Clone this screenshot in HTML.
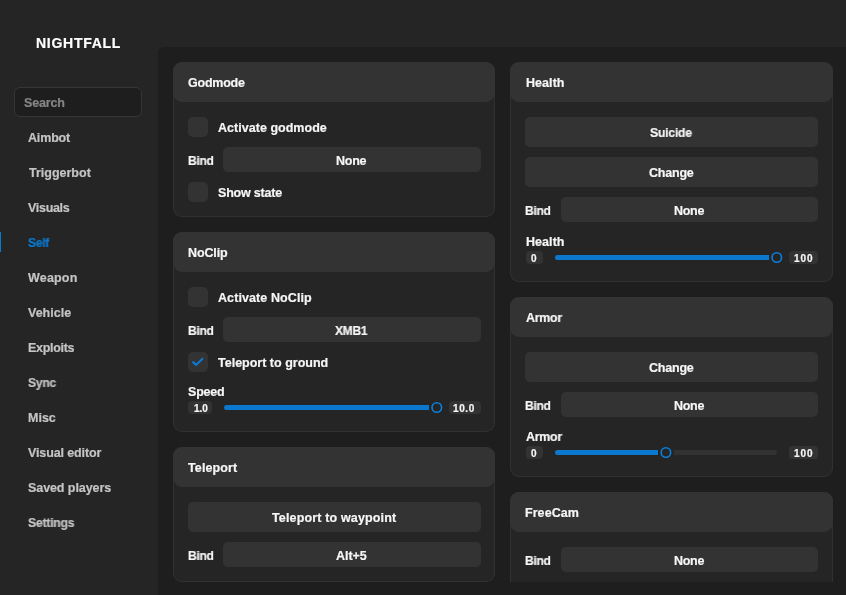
<!DOCTYPE html>
<html lang="en">
<head>
<meta charset="utf-8">
<title>NIGHTFALL</title>
<style>
*{box-sizing:border-box;margin:0;padding:0}
html,body{width:846px;height:595px;overflow:hidden;background:#252525}
body{position:relative;font-family:"Liberation Sans",sans-serif;font-weight:bold;font-size:12.5px;color:#f6f6f6}
.t{position:absolute;white-space:nowrap;line-height:20px;height:20px;will-change:transform;-webkit-text-stroke:0.2px;transform-origin:0 50%}
.search{position:absolute;left:14px;top:87px;width:128px;height:30px;border:1px solid #363636;border-radius:6px;background:#1e1e1e}
.ind{position:absolute;left:0;top:232px;width:1px;height:20px;background:#0a7ad3}
.panel{position:absolute;left:158px;top:47px;width:700px;height:560px;background:#1e1e1e;border-top-left-radius:6px}
.clip{position:absolute;left:158px;top:47px;width:688px;height:535px;overflow:hidden}
.card{position:absolute;background:#252525;border-radius:9px;box-shadow:inset 0 0 0 1px #313131}
.hd{position:absolute;left:0;top:0;width:100%;height:40px;background:#333;border-radius:9px}
.b,.cb,.bd{position:absolute;background:#333;border-radius:5px}
.bd{border-radius:4px}
.cb svg{display:block}
.tr{position:absolute;border-radius:0 3px 3px 0;background:#323232}
.fl{position:absolute;border-radius:3px 0 0 3px;background:#0a78cf}
.th{position:absolute}
.th svg{display:block}
</style>
</head>
<body>
<div class="search"></div>
<div class="ind"></div>
<div class="t" id="logo" style="left:35.7px;top:33px;font-size:14px;color:#ffffff;letter-spacing:0.73px">NIGHTFALL</div>
<div class="t" id="search" style="left:24.1px;top:93px;color:#858585;letter-spacing:-0.14px">Search</div>
<div class="t" id="n0" style="left:28.2px;top:128px;color:#c4c4c4;letter-spacing:-0.16px">Aimbot</div>
<div class="t" id="n1" style="left:28.9px;top:163px;color:#c4c4c4">Triggerbot</div>
<div class="t" id="n2" style="left:28.2px;top:198px;color:#c4c4c4;letter-spacing:-0.3px">Visuals</div>
<div class="t" id="n3" style="left:28.1px;top:233px;color:#0a7ad3;letter-spacing:-0.3px;transform:scaleX(0.967)">Self</div>
<div class="t" id="n4" style="left:28.3px;top:268px;color:#c4c4c4;letter-spacing:0.18px">Weapon</div>
<div class="t" id="n5" style="left:28.2px;top:303px;color:#c4c4c4">Vehicle</div>
<div class="t" id="n6" style="left:28px;top:338px;color:#c4c4c4;letter-spacing:-0.3px">Exploits</div>
<div class="t" id="n7" style="left:28.1px;top:373px;color:#c4c4c4;letter-spacing:-0.3px;transform:scaleX(0.973)">Sync</div>
<div class="t" id="n8" style="left:28px;top:408px;color:#c4c4c4">Misc</div>
<div class="t" id="n9" style="left:28.2px;top:443px;color:#c4c4c4;letter-spacing:-0.12px">Visual editor</div>
<div class="t" id="n10" style="left:28.1px;top:478px;color:#c4c4c4;letter-spacing:-0.08px">Saved players</div>
<div class="t" id="n11" style="left:28.1px;top:513px;color:#c4c4c4;letter-spacing:-0.3px;transform:scaleX(0.985)">Settings</div>
<div class="panel"></div>
<div class="clip">
<div class="card" id="god" style="left:15px;top:15px;width:322.3px;height:155px">
<div class="hd"></div>
<div class="cb" style="left:15.3px;top:55px;width:20px;height:20px"></div>
<div class="b" style="left:50.4px;top:85px;width:257.2px;height:25px"></div>
<div class="cb" style="left:15.3px;top:120px;width:20px;height:20px"></div>
<div class="t" id="g_h" style="left:15.4px;top:11px;letter-spacing:-0.23px">Godmode</div>
<div class="t" id="g_a" style="left:45.4px;top:56px;letter-spacing:0.03px">Activate godmode</div>
<div class="t" id="g_b" style="left:15.4px;top:89px;letter-spacing:-0.3px;transform:scaleX(0.961)">Bind</div>
<div class="t" id="g_n" style="left:163px;top:89px;letter-spacing:-0.24px">None</div>
<div class="t" id="g_s" style="left:45.4px;top:121px;letter-spacing:-0.19px">Show state</div>
</div>
<div class="card" id="noc" style="left:15px;top:185px;width:322.3px;height:200px">
<div class="hd"></div>
<div class="cb" style="left:15.3px;top:55px;width:20px;height:20px"></div>
<div class="b" style="left:50.4px;top:85px;width:257.2px;height:25px"></div>
<div class="cb" style="left:15.3px;top:120px;width:20px;height:20px"><svg width="20" height="20" viewBox="0 0 20 20"><path d="M4.5 9.6 L8.2 12.9 L15 6.3" fill="none" stroke="#0a7ad3" stroke-width="2.1" stroke-linecap="butt" stroke-linejoin="miter"/></svg></div>
<div class="bd" style="left:15.2px;top:169.4px;width:24.3px;height:12.6px"></div>
<div class="fl" style="left:51px;top:173px;width:204.8px;height:5px"></div>
<div class="th" style="left:256px;top:168px;width:14px;height:14px"><svg width="14" height="14" viewBox="0 0 14 14"><circle cx="7.8" cy="7.5" r="4.75" fill="none" stroke="#0b7fdb" stroke-width="1.6"/></svg></div>
<div class="bd" style="left:276px;top:169.4px;width:31.6px;height:12.6px"></div>
<div class="t" id="c_h" style="left:15.4px;top:11px;letter-spacing:-0.11px">NoClip</div>
<div class="t" id="c_a" style="left:45.4px;top:56px;letter-spacing:0.09px">Activate NoClip</div>
<div class="t" id="c_b" style="left:15.4px;top:89px;letter-spacing:-0.3px;transform:scaleX(0.961)">Bind</div>
<div class="t" id="c_n" style="left:162.1px;top:89px;letter-spacing:-0.3px;transform:scaleX(0.957)">XMB1</div>
<div class="t" id="c_t" style="left:45.4px;top:121px">Teleport to ground</div>
<div class="t" id="c_s" style="left:14.9px;top:150px;letter-spacing:-0.2px">Speed</div>
<div class="t" id="c_1" style="left:20.7px;top:167px;font-size:10px">1.0</div>
<div class="t" id="c_2" style="left:280.4px;top:167px;font-size:10px;letter-spacing:0.58px">10.0</div>
</div>
<div class="card" id="tel" style="left:15px;top:400px;width:322.3px;height:135px">
<div class="hd"></div>
<div class="b" style="left:15.2px;top:55px;width:292.4px;height:30px"></div>
<div class="b" style="left:50.4px;top:95px;width:257.2px;height:25px"></div>
<div class="t" id="t_h" style="left:15.1px;top:11px;letter-spacing:0.12px">Teleport</div>
<div class="t" id="t_w" style="left:99.1px;top:61px;letter-spacing:0.15px">Teleport to waypoint</div>
<div class="t" id="t_b" style="left:15.4px;top:99px;letter-spacing:-0.3px;transform:scaleX(0.961)">Bind</div>
<div class="t" id="t_n" style="left:163.4px;top:99px;letter-spacing:-0.05px">Alt+5</div>
</div>
<div class="card" id="hea" style="left:352.2px;top:15px;width:322.8px;height:220px">
<div class="hd"></div>
<div class="b" style="left:15.2px;top:55px;width:292.6px;height:30px"></div>
<div class="b" style="left:15.2px;top:95px;width:292.6px;height:30px"></div>
<div class="b" style="left:50.8px;top:135px;width:257px;height:25px"></div>
<div class="bd" style="left:15.5px;top:189.4px;width:17.1px;height:12.6px"></div>
<div class="fl" style="left:44.8px;top:193px;width:213.8px;height:5px"></div>
<div class="th" style="left:258.8px;top:188px;width:14px;height:14px"><svg width="14" height="14" viewBox="0 0 14 14"><circle cx="7.8" cy="7.5" r="4.75" fill="none" stroke="#0b7fdb" stroke-width="1.6"/></svg></div>
<div class="bd" style="left:278.8px;top:189.4px;width:29px;height:12.6px"></div>
<div class="t" id="h_h" style="left:15.6px;top:11px;letter-spacing:0.06px">Health</div>
<div class="t" id="h_s" style="left:140.2px;top:61px;letter-spacing:-0.3px;transform:scaleX(0.986)">Suicide</div>
<div class="t" id="h_c" style="left:138.5px;top:101px;letter-spacing:-0.21px">Change</div>
<div class="t" id="h_b" style="left:15px;top:139px;letter-spacing:-0.3px;transform:scaleX(0.961)">Bind</div>
<div class="t" id="h_n" style="left:164.2px;top:139px;letter-spacing:-0.3px">None</div>
<div class="t" id="h_l" style="left:15.6px;top:170px;letter-spacing:0.06px">Health</div>
<div class="t" id="h_0" style="left:20.8px;top:187px;font-size:10px">0</div>
<div class="t" id="h_1" style="left:284.1px;top:187px;font-size:10px;letter-spacing:0.9px">100</div>
</div>
<div class="card" id="arm" style="left:352.2px;top:250px;width:322.8px;height:180px">
<div class="hd"></div>
<div class="b" style="left:15.2px;top:55px;width:292.6px;height:30px"></div>
<div class="b" style="left:50.8px;top:95px;width:257px;height:25px"></div>
<div class="bd" style="left:15.5px;top:149.4px;width:17.1px;height:12.6px"></div>
<div class="fl" style="left:44.8px;top:153px;width:102.9px;height:5px"></div>
<div class="tr" style="left:163.7px;top:153px;width:102.9px;height:5px"></div>
<div class="th" style="left:147.8px;top:148px;width:14px;height:14px"><svg width="14" height="14" viewBox="0 0 14 14"><circle cx="7.9" cy="7.5" r="4.75" fill="none" stroke="#0b7fdb" stroke-width="1.6"/></svg></div>
<div class="bd" style="left:278.8px;top:149.4px;width:29px;height:12.6px"></div>
<div class="t" id="a_h" style="left:15.5px;top:11px;letter-spacing:-0.3px;transform:scaleX(0.994)">Armor</div>
<div class="t" id="a_c" style="left:138.5px;top:61px;letter-spacing:-0.21px">Change</div>
<div class="t" id="a_b" style="left:15px;top:99px;letter-spacing:-0.3px;transform:scaleX(0.961)">Bind</div>
<div class="t" id="a_n" style="left:164.2px;top:99px;letter-spacing:-0.3px">None</div>
<div class="t" id="a_l" style="left:15.5px;top:130px;letter-spacing:-0.3px;transform:scaleX(0.994)">Armor</div>
<div class="t" id="a_0" style="left:20.8px;top:147px;font-size:10px">0</div>
<div class="t" id="a_1" style="left:284.1px;top:147px;font-size:10px;letter-spacing:0.9px">100</div>
</div>
<div class="card" id="fre" style="left:352.2px;top:445px;width:322.8px;height:135px">
<div class="hd"></div>
<div class="b" style="left:50.8px;top:55px;width:257px;height:25px"></div>
<div class="t" id="f_h" style="left:14.7px;top:11px;letter-spacing:0.06px">FreeCam</div>
<div class="t" id="f_b" style="left:15px;top:59px;letter-spacing:-0.3px;transform:scaleX(0.961)">Bind</div>
<div class="t" id="f_n" style="left:164.2px;top:59px;letter-spacing:-0.3px">None</div>
</div>
</div>
</body>
</html>
